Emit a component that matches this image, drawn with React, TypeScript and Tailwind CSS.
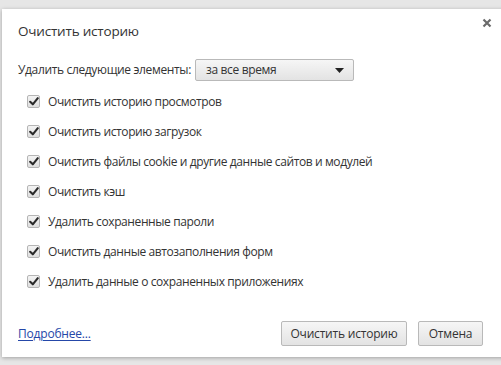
import React from 'react';

const items = [
  'Очистить историю просмотров',
  'Очистить историю загрузок',
  'Очистить файлы cookie и другие данные сайтов и модулей',
  'Очистить кэш',
  'Удалить сохраненные пароли',
  'Очистить данные автозаполнения форм',
  'Удалить данные о сохраненных приложениях',
];

const Check = () => (
  <span className="w-[13px] h-[13px] shrink-0 rounded-[2px] border border-[#b5b5b5] bg-gradient-to-b from-[#f4f4f4] to-[#dedede] flex items-center justify-center">
    <svg width="10" height="9" viewBox="0 0 10 9">
      <path d="M1.2 4.8 L3.8 7.3 L8.8 1.2" fill="none" stroke="#2b2b2b" strokeWidth="2.1" strokeLinecap="round" strokeLinejoin="round" />
    </svg>
  </span>
);

export default function App() {
  return (
    <div className="w-[501px] h-[365px] bg-[#e6e6e6] pl-[2px] pt-[9px] overflow-hidden" style={{ fontFamily: '"Open Sans", "Noto Sans", sans-serif' }}>
      <div className="w-[510px] h-[348px] bg-white shadow-[0_1px_4px_rgba(0,0,0,0.3)] relative text-[#333] flex flex-col">
        <button className="absolute left-[478px] top-[7px] w-[14px] h-[14px] flex items-center justify-center">
          <svg width="10" height="10" viewBox="0 0 10 10">
            <path d="M1.5 1.5 L8.5 8.5 M8.5 1.5 L1.5 8.5" stroke="#6b6b6b" strokeWidth="2.2" />
          </svg>
        </button>
        <div className="pl-[16px] pt-[12px] text-[13.5px] leading-[20px] tracking-[-0.2px]">Очистить историю</div>
        <div className="pl-[16px] mt-[18px] flex items-center gap-[4px] text-[12px] tracking-[-0.35px]">
          <span>Удалить следующие элементы:</span>
          <div className="w-[159px] h-[22px] rounded-[2px] border border-[#b9b9b9] bg-gradient-to-b from-[#f6f6f6] to-[#e3e3e3] flex items-center justify-between pl-[10px] pr-[9px]">
            <span>за все время</span>
            <svg width="9" height="5" viewBox="0 0 9 5"><path d="M0 0 H9 L4.5 5 Z" fill="#222" /></svg>
          </div>
        </div>
        <div className="pl-[25px] mt-[14px] flex flex-col gap-[17px] text-[12px] tracking-[-0.4px]">
          {items.map((t) => (
            <div key={t} className="flex items-center gap-[8px] h-[13px]">
              <Check />
              <span className="whitespace-nowrap">{t}</span>
            </div>
          ))}
        </div>
        <div className="flex-1" />
        <div className="flex items-center pl-[16px] pb-[11px] text-[12px] tracking-[-0.2px]">
          <a className="text-[#2547a8] underline underline-offset-2">Подробнее...</a>
          <div className="flex-1" />
          <div className="flex gap-[11px] mr-[29px]">
            <button className="h-[25px] w-[126px] rounded-[2px] border border-[#b9b9b9] bg-gradient-to-b from-[#f6f6f6] to-[#e3e3e3] text-[#333]">Очистить историю</button>
            <button className="h-[25px] w-[65px] rounded-[2px] border border-[#b9b9b9] bg-gradient-to-b from-[#f6f6f6] to-[#e3e3e3] text-[#333]">Отмена</button>
          </div>
        </div>
      </div>
    </div>
  );
}
